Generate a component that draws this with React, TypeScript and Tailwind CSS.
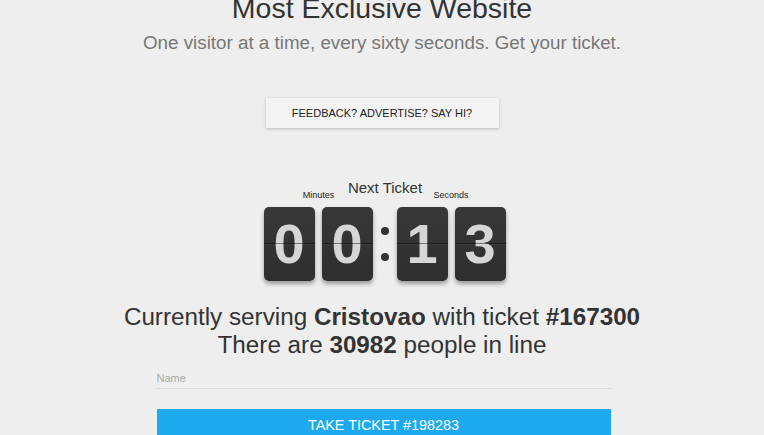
import type { ReactNode } from 'react'

const FONT = "font-['Liberation_Sans',Arial,sans-serif]"

function FlipCard({ digit }: { digit: string }) {
  return (
    <div className="relative flex h-[74px] w-[51px] items-center justify-center overflow-hidden rounded-[5px] bg-gradient-to-b from-[#383838] to-[#2e2e2e] shadow-[0_3px_4px_rgba(0,0,0,0.35)]">
      <span className="text-[56px] font-bold leading-[74px] text-[#d6d6d6]">{digit}</span>
      <div className="absolute left-0 right-0 top-[36px] h-px bg-black/45" />
      <div className="absolute left-0 right-0 top-[37px] h-px bg-white/5" />
    </div>
  )
}

function Group({ children }: { children: ReactNode }) {
  return <div className="flex gap-[7px]">{children}</div>
}

export default function App() {
  return (
    <div className={`min-h-[435px] w-full overflow-hidden bg-[#eeeeee] ${FONT}`}>
      <div className="flex flex-col items-center">
        <h1 className="mt-[-6px] text-[28.5px] font-normal leading-[28px] text-[#333333]">
          Most Exclusive Website
        </h1>
        <p className="mt-[12px] text-[18.8px] leading-[18px] text-[#777777]">
          One visitor at a time, every sixty seconds. Get your ticket.
        </p>

        <button
          type="button"
          className="mt-[46px] h-[30px] w-[233px] bg-[#f3f3f3] text-[11px] text-[#222222] shadow-[0_1px_3px_rgba(0,0,0,0.22)]"
        >
          FEEDBACK? ADVERTISE? SAY HI?
        </button>

        <div className="mt-[52px] flex flex-col items-center pl-[5px]">
          <div className="grid h-[20px] grid-cols-[109px_24px_108px]">
            <div className="mt-[11px] flex justify-center text-[9px] leading-[9px] text-[#222222]">
              Minutes
            </div>
            <div className="flex justify-center whitespace-nowrap text-[15px] leading-[15px] text-[#333333]">
              Next Ticket
            </div>
            <div className="mt-[11px] flex justify-center text-[9px] leading-[9px] text-[#222222]">
              Seconds
            </div>
          </div>

          <div className="mt-[7px] flex">
            <Group>
              <FlipCard digit="0" />
              <FlipCard digit="0" />
            </Group>
            <div className="flex w-[24px] flex-col items-center justify-center gap-[18px]">
              <div className="h-[8px] w-[8px] rounded-full bg-[#333333]" />
              <div className="h-[8px] w-[8px] rounded-full bg-[#333333]" />
            </div>
            <Group>
              <FlipCard digit="1" />
              <FlipCard digit="3" />
            </Group>
          </div>
        </div>

        <div className="mt-[22px] text-center text-[24.25px] leading-[28px] text-[#333333]">
          <p>
            Currently serving <b>Cristovao</b> with ticket <b>#167300</b>
          </p>
          <p>
            There are <b>30982</b> people in line
          </p>
        </div>

        <div className="mt-[12px] w-[457px] pl-[3px]">
          <input
            type="text"
            placeholder="Name"
            className="block h-[18px] w-full border-b border-[#dddddd] bg-transparent p-0 pb-[3px] text-[11px] leading-[14px] text-[#333333] outline-none placeholder:text-[#aaaaaa]"
          />
          <button
            type="button"
            className="mt-[20px] h-[34px] w-full bg-[#1da9f0] text-[14.4px] text-white"
          >
            TAKE TICKET #198283
          </button>
        </div>
      </div>
    </div>
  )
}
